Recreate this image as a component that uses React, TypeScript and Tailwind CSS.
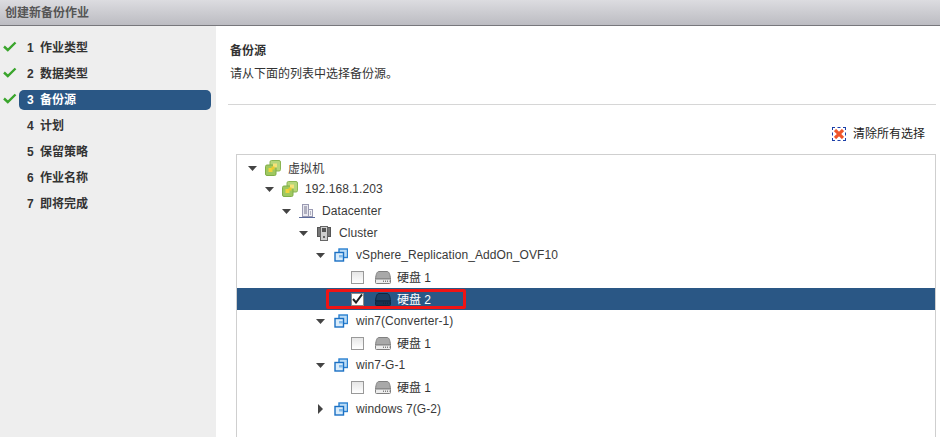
const font = "font-['Liberation_Sans','Noto_Sans_CJK_SC',sans-serif]";

const steps = [
  { n: 1, label: '作业类型', done: true },
  { n: 2, label: '数据类型', done: true },
  { n: 3, label: '备份源', done: true, active: true },
  { n: 4, label: '计划' },
  { n: 5, label: '保留策略' },
  { n: 6, label: '作业名称' },
  { n: 7, label: '即将完成' },
];

function Check() {
  return (
    <svg width="14" height="11" viewBox="0 0 14 11" className="shrink-0">
      <path d="M1 5.5 L4.8 9 L12.5 1.5" fill="none" stroke="#3aa52c" strokeWidth="2.4" />
    </svg>
  );
}

function Caret({ open = true }: { open?: boolean }) {
  return open ? (
    <svg width="9" height="5" viewBox="0 0 9 5" className="shrink-0">
      <path d="M0 0 H9 L4.5 5 Z" fill="#444" />
    </svg>
  ) : (
    <svg width="5" height="10" viewBox="0 0 5 10" className="ml-[2px] mr-[2px] shrink-0">
      <path d="M0 0 V10 L5 5 Z" fill="#444" />
    </svg>
  );
}

function HostIcon() {
  return (
    <svg width="16" height="16" viewBox="0 0 16 16" className="shrink-0">
      <rect x="5" y="0.5" width="10.5" height="10.5" rx="1.5" fill="#b5d67a" stroke="#8ab552" />
      <rect x="0.5" y="5" width="10.5" height="10.5" rx="1.5" fill="#9fc860" stroke="#7fae48" />
      <rect x="3.5" y="8" width="4" height="4" fill="#f2d43c" />
      <rect x="8" y="3.5" width="4" height="4" fill="#f4e27a" />
      <rect x="6.5" y="6.5" width="3" height="3" fill="#e9c92f" />
    </svg>
  );
}

function DatacenterIcon() {
  return (
    <svg width="16" height="16" viewBox="0 0 16 16" className="shrink-0">
      <rect x="3.5" y="1.5" width="6" height="12" fill="#e9e9f0" stroke="#9a9ab2" />
      <rect x="9.5" y="6.5" width="4" height="7" fill="#f2f2f6" stroke="#9a9ab2" />
      <path d="M5 4h3M5 6h3M5 8h3M5 10h3M11 9h1M11 11h1" stroke="#77778f" strokeWidth="1" />
      <path d="M0 14.5h16" stroke="#5c6b9c" strokeWidth="1" />
    </svg>
  );
}

function ClusterIcon() {
  return (
    <svg width="14" height="15" viewBox="0 0 14 15" className="shrink-0">
      <rect x="0.5" y="1.5" width="4" height="9" fill="#777" stroke="#555" />
      <rect x="9.5" y="1.5" width="4" height="9" fill="#777" stroke="#555" />
      <rect x="3.5" y="0.5" width="7" height="14" fill="#cfcfcf" stroke="#666" />
      <rect x="5" y="2" width="4" height="4" fill="#555" />
      <rect x="6" y="10" width="2" height="2" fill="#666" />
    </svg>
  );
}

function VmIcon() {
  return (
    <svg width="14" height="14" viewBox="0 0 14 14" className="shrink-0">
      <rect x="5" y="1" width="8.5" height="8.5" fill="#bcdcf6" stroke="#2a80d0" strokeWidth="1.4" />
      <rect x="1" y="4.5" width="8.5" height="8.5" fill="#d9ecfb" stroke="#1a70c4" strokeWidth="1.4" />
      <rect x="5" y="7" width="4" height="2.5" fill="#7fb8ea" />
    </svg>
  );
}

function DiskIcon({ dark = false }: { dark?: boolean }) {
  const top = dark ? '#1c3f63' : '#a9a9a9';
  const base = dark ? '#15324f' : '#ededed';
  const line = dark ? '#0f2740' : '#808080';
  return (
    <svg width="16" height="13" viewBox="0 0 16 13" className="shrink-0">
      <path d="M0.5 8 C1 3 2 0.5 4 0.5 H12 C14 0.5 15 3 15.5 8 Z" fill={top} stroke={line} />
      <rect x="0.5" y="8" width="15" height="4.5" rx="1" fill={base} stroke={line} />
      <path d="M8 10.2h1M10 10.2h1M12 10.2h1M14 10.2h0.5" stroke={line} strokeWidth="1.5" />
    </svg>
  );
}

function FolderRow({ pad, icon, label, gap, open = true, short = false }: { pad: string; icon: React.ReactNode; label: string; gap: string; open?: boolean; short?: boolean }) {
  return (
    <div className={`flex items-center ${short ? 'h-[20px]' : 'h-[22px]'} ${pad}`}>
      <Caret open={open} />
      <span className="ml-[8px] flex w-[16px] justify-center">{icon}</span>
      <span className={`${gap} text-[12px] tracking-[0.08px] text-[#3a3a3a]`}>{label}</span>
    </div>
  );
}

function DiskRow({ label }: { label: string }) {
  return (
    <div className="flex h-[22px] items-center pl-[114px]">
      <span className="size-[13px] shrink-0 border border-[#999] bg-gradient-to-b from-[#e6e6e6] to-white" />
      <span className="ml-[11px]"><DiskIcon /></span>
      <span className="ml-[6px] pt-[2px] text-[12px] text-[#333]">{label}</span>
    </div>
  );
}

export default function App() {
  return (
    <div className={`flex h-[437px] w-[940px] flex-col overflow-hidden bg-white ${font}`}>
      <header className="flex h-[26px] shrink-0 items-center border-b border-[#77777c] bg-gradient-to-b from-[#dcdce0] to-[#bcbcc2] pl-[5px] text-[12px] font-bold text-[#555]">
        创建新备份作业
      </header>
      <div className="flex min-h-0 flex-1">
        <aside className="w-[216px] shrink-0 bg-[#eeeeee] pt-[9px]">
          {steps.map((s) => (
            <div key={s.n} className="flex h-[26px] items-center">
              <span className="flex w-[19px] -translate-y-[2px] justify-center pl-[1px]">{s.done && <Check />}</span>
              <div className={`flex h-[20px] w-[192px] items-center rounded-[5px] pl-[8px] text-[12px] font-bold ${s.active ? 'bg-[#2a5785] text-white' : 'text-[#333]'}`}>
                <span className="w-[13px]">{s.n}</span>
                <span>{s.label}</span>
              </div>
            </div>
          ))}
        </aside>
        <main className="min-w-0 flex-1 pl-[12px] pr-[4px]">
          <div className="h-[79px] border-b border-[#d6d6d6] pt-[17px] pl-[2px]">
            <h2 className="text-[12px] leading-[16px] font-bold text-[#333]">备份源</h2>
            <p className="mt-[7px] text-[12px] leading-[16px] text-[#333]">请从下面的列表中选择备份源。</p>
          </div>
          <div className="flex h-[49px] items-center justify-end pt-[8px] pr-[11px]">
            <span className="flex size-[14px] items-center justify-center border border-dashed border-[#1b3fa8]">
              <svg width="10" height="10" viewBox="0 0 10 10">
                <path d="M1 1 L9 9 M9 1 L1 9" stroke="#f0562a" strokeWidth="3.2" />
              </svg>
            </span>
            <span className="ml-[7px] text-[12px] text-[#222]">清除所有选择</span>
          </div>
          <div className="ml-[8px] h-[300px] border border-[#cfcfcf] pt-[3px]">
            <FolderRow pad="pl-[11px]" icon={<HostIcon />} label="虚拟机" gap="ml-[7px] pt-[2px]" short />
            <FolderRow pad="pl-[28px]" icon={<HostIcon />} label="192.168.1.203" gap="ml-[7px]" />
            <FolderRow pad="pl-[45px]" icon={<DatacenterIcon />} label="Datacenter" gap="ml-[7px]" />
            <FolderRow pad="pl-[62px]" icon={<ClusterIcon />} label="Cluster" gap="ml-[7px]" />
            <FolderRow pad="pl-[79px]" icon={<VmIcon />} label="vSphere_Replication_AddOn_OVF10" gap="ml-[7px]" />
            <DiskRow label="硬盘 1" />
            <div className="relative flex h-[22px] items-center bg-[#2a5785] pl-[114px]">
              <span className="flex size-[13px] shrink-0 items-center justify-center border border-[#8a8a8a] bg-white">
                <svg width="11" height="10" viewBox="0 0 11 10">
                  <path d="M1 5 L4 8.5 L10 0.5" fill="none" stroke="#222" strokeWidth="2" />
                </svg>
              </span>
              <span className="ml-[11px]"><DiskIcon dark /></span>
              <span className="ml-[6px] pt-[2px] text-[12px] text-white">硬盘 2</span>
              <span className="absolute left-[89px] top-[1px] h-[20px] w-[140px] rounded-[2px] border-[3px] border-[#f01414]" />
            </div>
            <FolderRow pad="pl-[79px]" icon={<VmIcon />} label="win7(Converter-1)" gap="ml-[7px]" />
            <DiskRow label="硬盘 1" />
            <FolderRow pad="pl-[79px]" icon={<VmIcon />} label="win7-G-1" gap="ml-[7px]" />
            <DiskRow label="硬盘 1" />
            <FolderRow pad="pl-[79px]" icon={<VmIcon />} label="windows 7(G-2)" gap="ml-[7px]" open={false} />
          </div>
        </main>
      </div>
    </div>
  );
}
